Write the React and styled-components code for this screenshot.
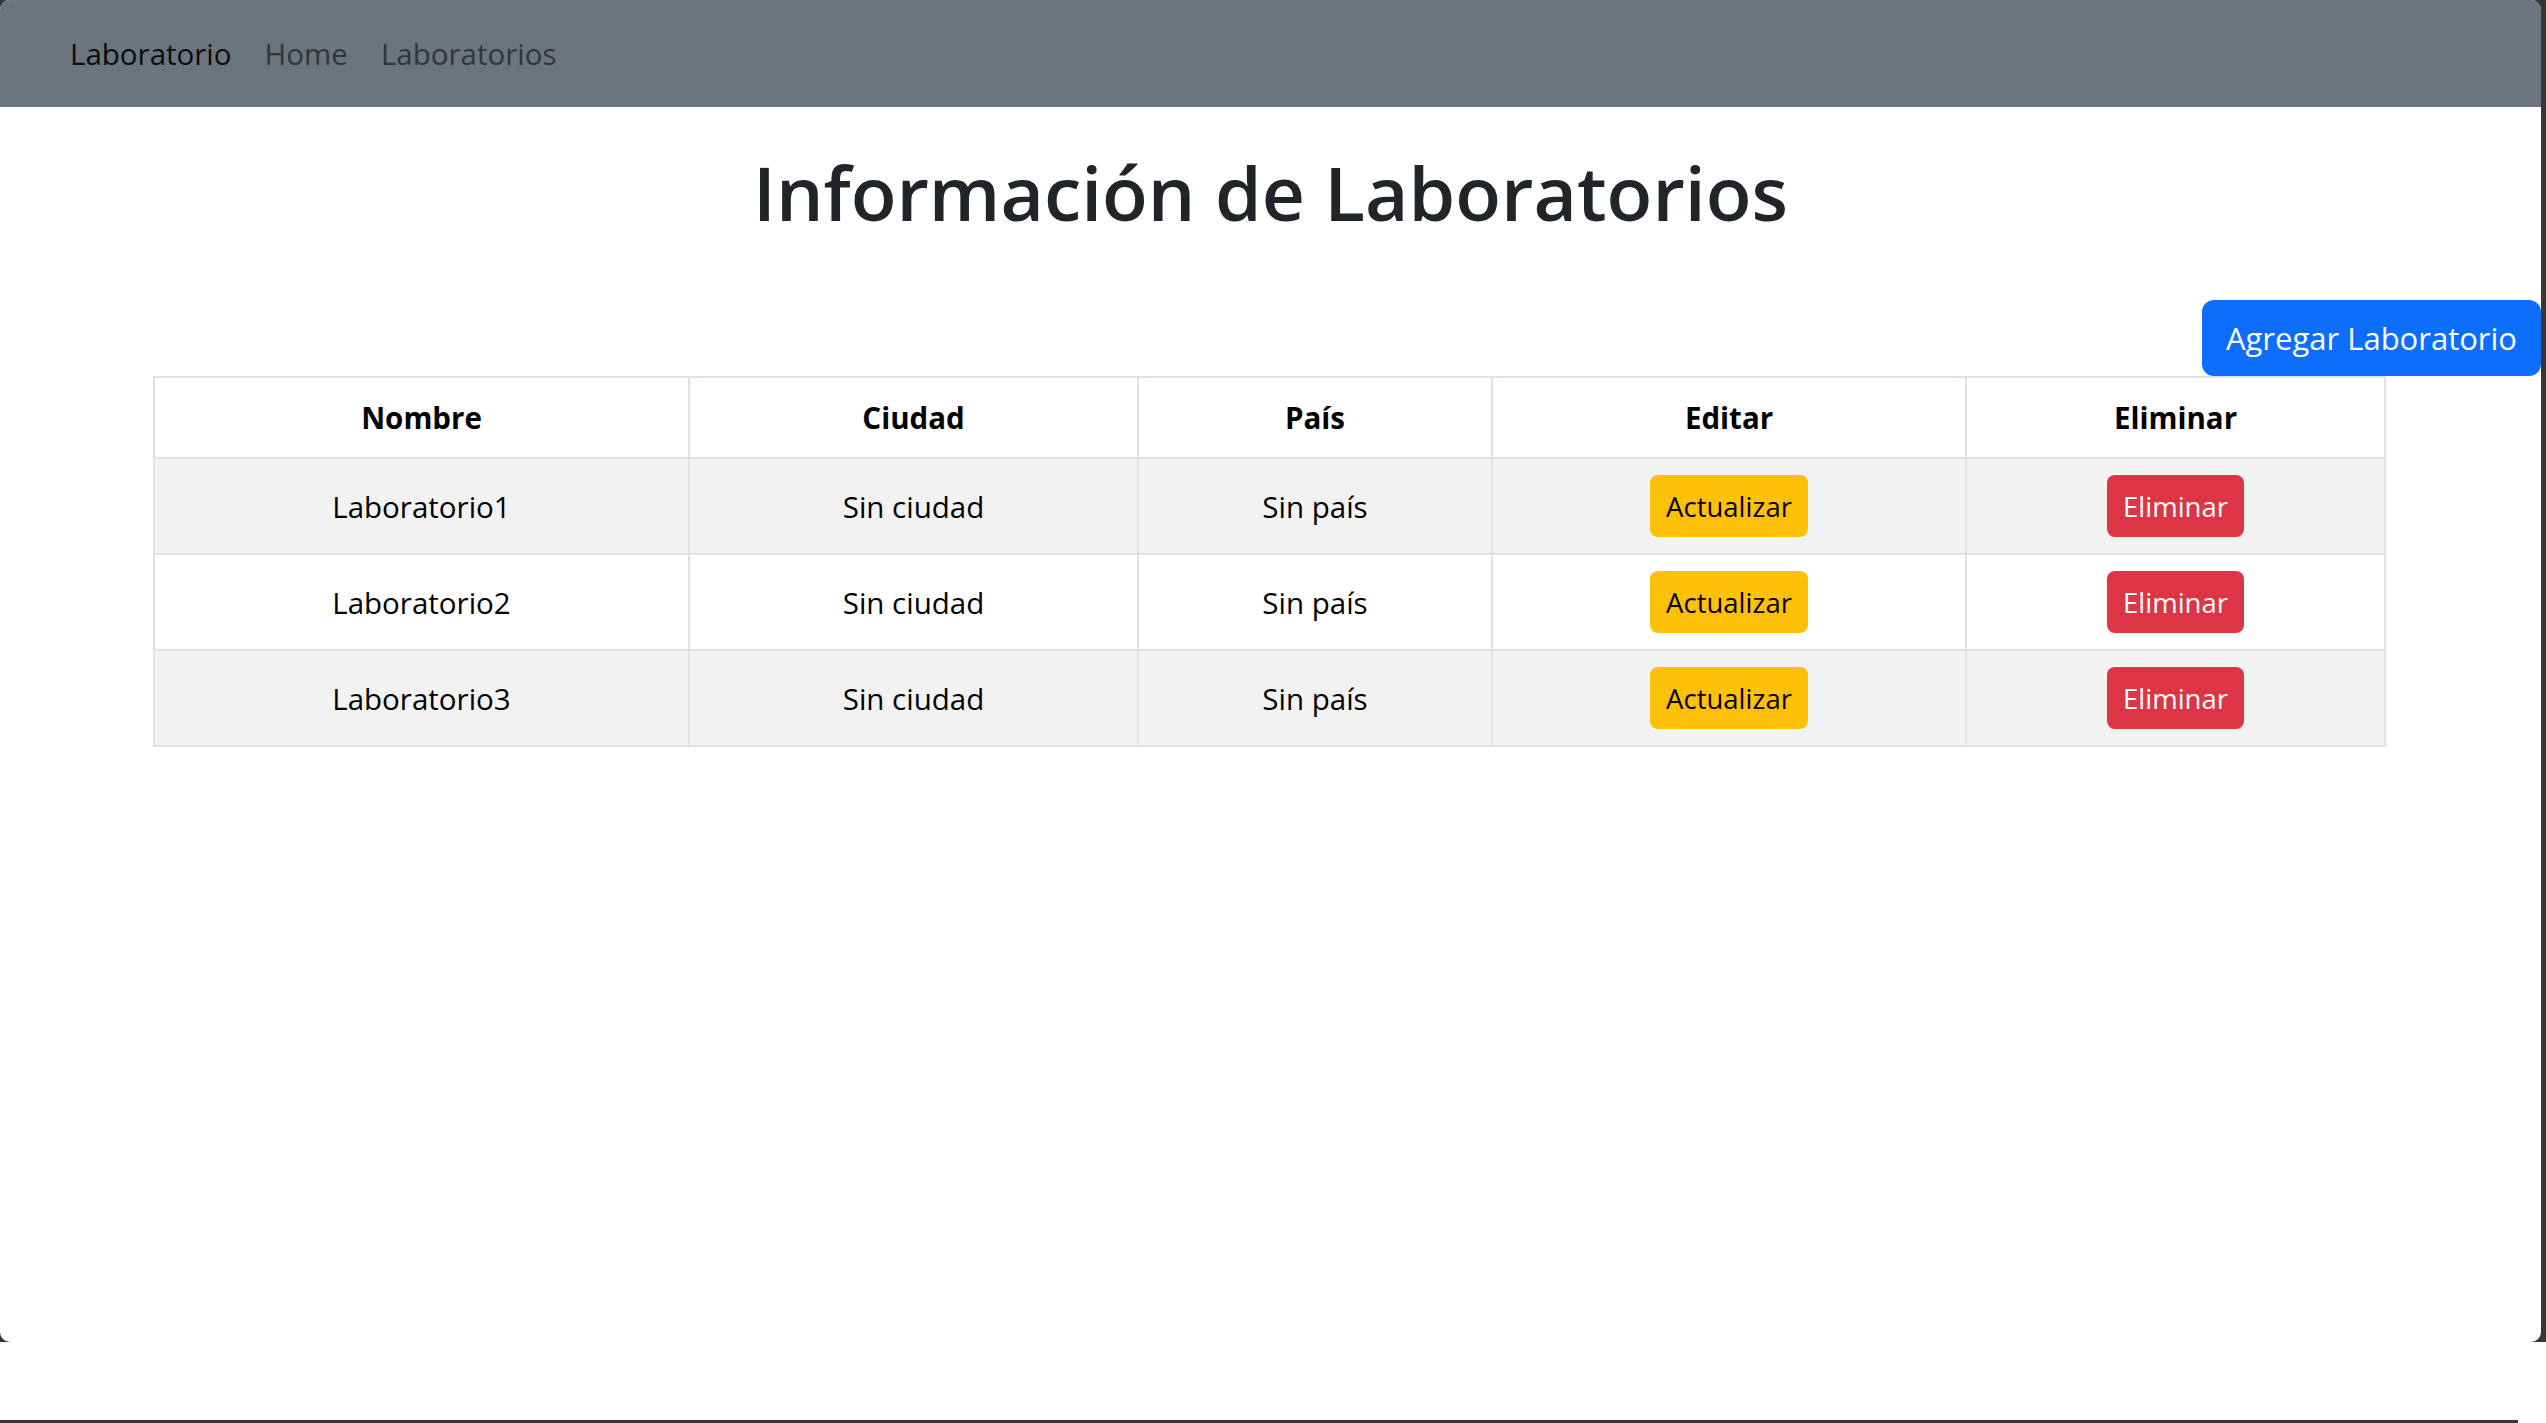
import React from 'react';
import styled, { createGlobalStyle } from 'styled-components';

const GlobalStyle = createGlobalStyle`
  html, body {
    margin: 0;
    padding: 0;
    background: #fff;
  }
  body {
    font-family: "Open Sans", "Noto Sans", sans-serif;
  }
`;

const Screen = styled.div`
  width: 2546px;
  height: 1423px;
  display: flex;
  flex-direction: column;
  background: #fff;
  overflow: hidden;
`;

const Backdrop = styled.div`
  height: 1342px;
  padding-right: 5px;
  background: #363636;
  display: flex;
`;

const Window = styled.div`
  flex: 1;
  background: #fff;
  border-radius: 10px;
  overflow: hidden;
  display: flex;
  flex-direction: column;
`;

const Spacer = styled.div`
  height: 78px;
`;

const BottomLine = styled.div`
  width: 2518px;
  height: 3px;
  background: #363636;
`;

const Navbar = styled.nav`
  height: 107px;
  background: #6c757d;
  display: flex;
  align-items: center;
  padding-left: 70px;
  gap: 33px;
`;

const NavLink = styled.a`
  font-size: 29.5px;
  color: ${(p) => (p.$brand ? '#0b0c0d' : '#313538')};
  text-decoration: none;
  line-height: 1;
`;

const Title = styled.h1`
  margin: 37px 0 0;
  height: 96px;
  line-height: 96px;
  font-size: 75px;
  font-weight: 600;
  color: #212529;
  text-align: center;
`;

const ButtonRow = styled.div`
  display: flex;
  justify-content: flex-end;
  margin-top: 60px;
`;

const Button = styled.button`
  font-family: "Open Sans", "Noto Sans", sans-serif;
  border: none;
  cursor: pointer;
  background: ${(p) => p.$bg};
  color: ${(p) => p.$fg};
  height: ${(p) => (p.$small ? '62px' : '76px')};
  padding: ${(p) => (p.$small ? '0 16px' : '0 24px')};
  font-size: ${(p) => (p.$small ? '27.5px' : '31px')};
  border-radius: ${(p) => (p.$small ? '8px' : '12px')};
  display: inline-flex;
  align-items: center;
  justify-content: center;
`;

const Table = styled.table`
  width: 2231px;
  margin: 0 0 0 153px;
  border-collapse: collapse;
  table-layout: fixed;
  color: #000;
  font-size: 29.5px;
`;

const HeadCell = styled.th`
  height: 79px;
  padding: 0;
  border: 2px solid #dee2e6;
  font-weight: 700;
  text-align: center;
  background: #fff;
`;

const Row = styled.tr`
  background: ${(p) => (p.$striped ? '#f2f2f2' : '#fff')};
`;

const Cell = styled.td`
  height: 94px;
  padding: 0;
  border: 2px solid #dee2e6;
  text-align: center;
  vertical-align: middle;
`;

const columns = [
  { label: 'Nombre', width: 535 },
  { label: 'Ciudad', width: 449 },
  { label: 'País', width: 354 },
  { label: 'Editar', width: 474 },
  { label: 'Eliminar', width: 419 },
];

const labs = [
  { nombre: 'Laboratorio1', ciudad: 'Sin ciudad', pais: 'Sin país' },
  { nombre: 'Laboratorio2', ciudad: 'Sin ciudad', pais: 'Sin país' },
  { nombre: 'Laboratorio3', ciudad: 'Sin ciudad', pais: 'Sin país' },
];

const App = () => {
  return (
    <Screen>
      <GlobalStyle />
      <Backdrop>
        <Window>
          {/* Navbar */}
          <Navbar>
            <NavLink $brand href="#">Laboratorio</NavLink>
            <NavLink href="#">Home</NavLink>
            <NavLink href="#">Laboratorios</NavLink>
          </Navbar>

          <Title>Información de Laboratorios</Title>

          <ButtonRow>
            <Button $bg="#0d6efd" $fg="#fff" type="button">Agregar Laboratorio</Button>
          </ButtonRow>

          {/* Lista de laboratorios */}
          <Table>
            <colgroup>
              {columns.map((c) => (
                <col key={c.label} style={{ width: c.width }} />
              ))}
            </colgroup>
            <thead>
              <tr>
                {columns.map((c) => (
                  <HeadCell key={c.label}>{c.label}</HeadCell>
                ))}
              </tr>
            </thead>
            <tbody>
              {labs.map((lab, i) => (
                <Row key={lab.nombre} $striped={i % 2 === 0}>
                  <Cell>{lab.nombre}</Cell>
                  <Cell>{lab.ciudad}</Cell>
                  <Cell>{lab.pais}</Cell>
                  <Cell>
                    <Button $small $bg="#ffc107" $fg="#000" type="button">Actualizar</Button>
                  </Cell>
                  <Cell>
                    <Button $small $bg="#dc3545" $fg="#fff" type="button">Eliminar</Button>
                  </Cell>
                </Row>
              ))}
            </tbody>
          </Table>
        </Window>
      </Backdrop>
      <Spacer />
      <BottomLine />
    </Screen>
  );
};

export default App;
